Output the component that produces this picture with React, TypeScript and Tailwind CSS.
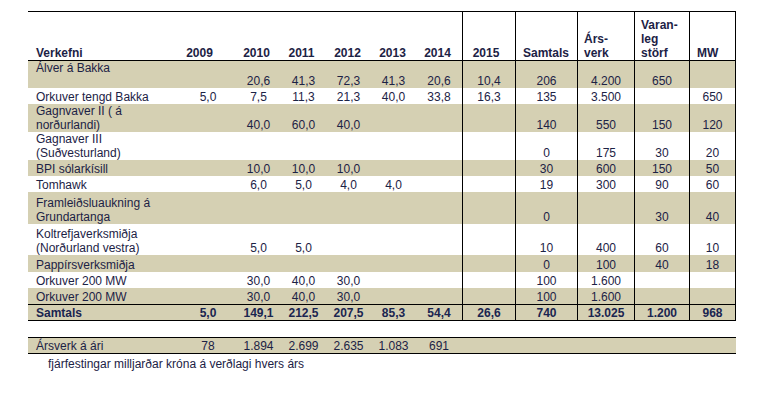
import React from "react";

const W = [
  "w-[152px]",
  "w-[56px]",
  "w-[45px]",
  "w-[45px]",
  "w-[45px]",
  "w-[45px]",
  "w-[46px]",
  "w-[53px]",
  "w-[62px]",
  "w-[57px]",
  "w-[55px]",
  "w-[47px]",
];
const B = [
  "",
  "",
  "",
  "",
  "",
  "",
  "",
  "border-l border-black",
  "border-l border-black",
  "border-l border-black",
  "border-l border-black",
  "border-l border-r border-black",
];

type Row = {
  label: React.ReactNode;
  vals: string[];
  h: string;
  beige: boolean;
  top?: boolean;
};

const rows: Row[] = [
  { label: "Álver á Bakka", vals: ["", "20,6", "41,3", "72,3", "41,3", "20,6", "10,4", "206", "4.200", "650", ""], h: "h-[27px]", beige: true, top: true },
  { label: "Orkuver tengd Bakka", vals: ["5,0", "7,5", "11,3", "21,3", "40,0", "33,8", "16,3", "135", "3.500", "", "650"], h: "h-[16px]", beige: false },
  { label: <>Gagnvaver II ( á<br />norðurlandi)</>, vals: ["", "40,0", "60,0", "40,0", "", "", "", "140", "550", "150", "120"], h: "h-[28px]", beige: true },
  { label: <>Gagnaver III<br />(Suðvesturland)</>, vals: ["", "", "", "", "", "", "", "0", "175", "30", "20"], h: "h-[28px]", beige: false },
  { label: "BPI sólarkísill", vals: ["", "10,0", "10,0", "10,0", "", "", "", "30", "600", "150", "50"], h: "h-[16px]", beige: true },
  { label: "Tomhawk", vals: ["", "6,0", "5,0", "4,0", "4,0", "", "", "19", "300", "90", "60"], h: "h-[16px]", beige: false },
  { label: <>Framleiðsluaukning á<br />Grundartanga</>, vals: ["", "", "", "", "", "", "", "0", "", "30", "40"], h: "h-[32px]", beige: true },
  { label: <>Koltrefjaverksmiðja<br />(Norðurland vestra)</>, vals: ["", "5,0", "5,0", "", "", "", "", "10", "400", "60", "10"], h: "h-[31px]", beige: false },
  { label: "Pappírsverksmiðja", vals: ["", "", "", "", "", "", "", "0", "100", "40", "18"], h: "h-[17px]", beige: true },
  { label: "Orkuver 200 MW", vals: ["", "30,0", "40,0", "30,0", "", "", "", "100", "1.600", "", ""], h: "h-[16px]", beige: false },
  { label: "Orkuver 200 MW", vals: ["", "30,0", "40,0", "30,0", "", "", "", "100", "1.600", "", ""], h: "h-[16px]", beige: true },
];

const totals = ["5,0", "149,1", "212,5", "207,5", "85,3", "54,4", "26,6", "740", "13.025", "1.200", "968"];
const arsverk = ["78", "1.894", "2.699", "2.635", "1.083", "691"];

const yearHeadPad = ["pr-[17px]", "pr-[4px]", "pr-[4px]", "pr-[2px]", "pr-[2px]", "pr-[3px]", "pr-[6px]"];
const years = ["2009", "2010", "2011", "2012", "2013", "2014", "2015"];

export default function App() {
  return (
    <div className="w-[763px] h-[405px] bg-white pt-[11px] pl-[28px] font-['Liberation_Sans',Arial,Helvetica,sans-serif] text-[12px] leading-[14px] text-[#1c2245]">
      <div className="w-[708px] border-t border-black">
        {/* header */}
        <div className="flex h-[49px] border-b border-black font-bold">
          <div className={`${W[0]} shrink-0 flex items-end pl-[8px]`}>Verkefni</div>
          {years.map((y, i) => (
            <div key={y} className={`${W[i + 1]} ${B[i + 1]} ${yearHeadPad[i]} shrink-0 flex items-end justify-center`}>
              {y}
            </div>
          ))}
          <div className={`${W[8]} ${B[8]} shrink-0 flex items-end pl-[7px]`}>Samtals</div>
          <div className={`${W[9]} ${B[9]} shrink-0 flex items-end pl-[6px]`}>
            Árs-
            <br />
            verk
          </div>
          <div className={`${W[10]} ${B[10]} shrink-0 flex items-end pl-[6px]`}>
            Varan-
            <br />
            leg
            <br />
            störf
          </div>
          <div className={`${W[11]} ${B[11]} shrink-0 flex items-end pl-[7px]`}>MW</div>
        </div>

        {rows.map((r, ri) => (
          <div key={ri} className={`flex ${r.h} ${r.beige ? "bg-[#d5d0b3]" : "bg-white"}`}>
            <div className={`${W[0]} shrink-0 flex ${r.top ? "items-start" : "items-end"} pl-[8px] whitespace-nowrap`}>
              <div>{r.label}</div>
            </div>
            {r.vals.map((v, i) => (
              <div key={i} className={`${W[i + 1]} ${B[i + 1]} shrink-0 flex items-end justify-center`}>
                {v}
              </div>
            ))}
          </div>
        ))}

        {/* totals */}
        <div className="flex h-[17px] border-t border-b border-black bg-[#d5d0b3] font-bold text-[#1a2550]">
          <div className={`${W[0]} shrink-0 flex items-end pl-[8px]`}>Samtals</div>
          {totals.map((v, i) => (
            <div key={i} className={`${W[i + 1]} ${B[i + 1]} shrink-0 flex items-end justify-center`}>
              {v}
            </div>
          ))}
        </div>
      </div>

      {/* ársverk row */}
      <div className="mt-[16px] w-[708px] flex h-[17px] border-t border-b border-black bg-[#d5d0b3]">
        <div className={`${W[0]} shrink-0 flex items-end pl-[8px]`}>Ársverk á ári</div>
        {arsverk.map((v, i) => (
          <div key={i} className={`${W[i + 1]} shrink-0 flex items-end justify-center`}>
            {v}
          </div>
        ))}
      </div>

      <div className="mt-[3px] pl-[20px]">fjárfestingar milljarðar króna á verðlagi hvers árs</div>
    </div>
  );
}
